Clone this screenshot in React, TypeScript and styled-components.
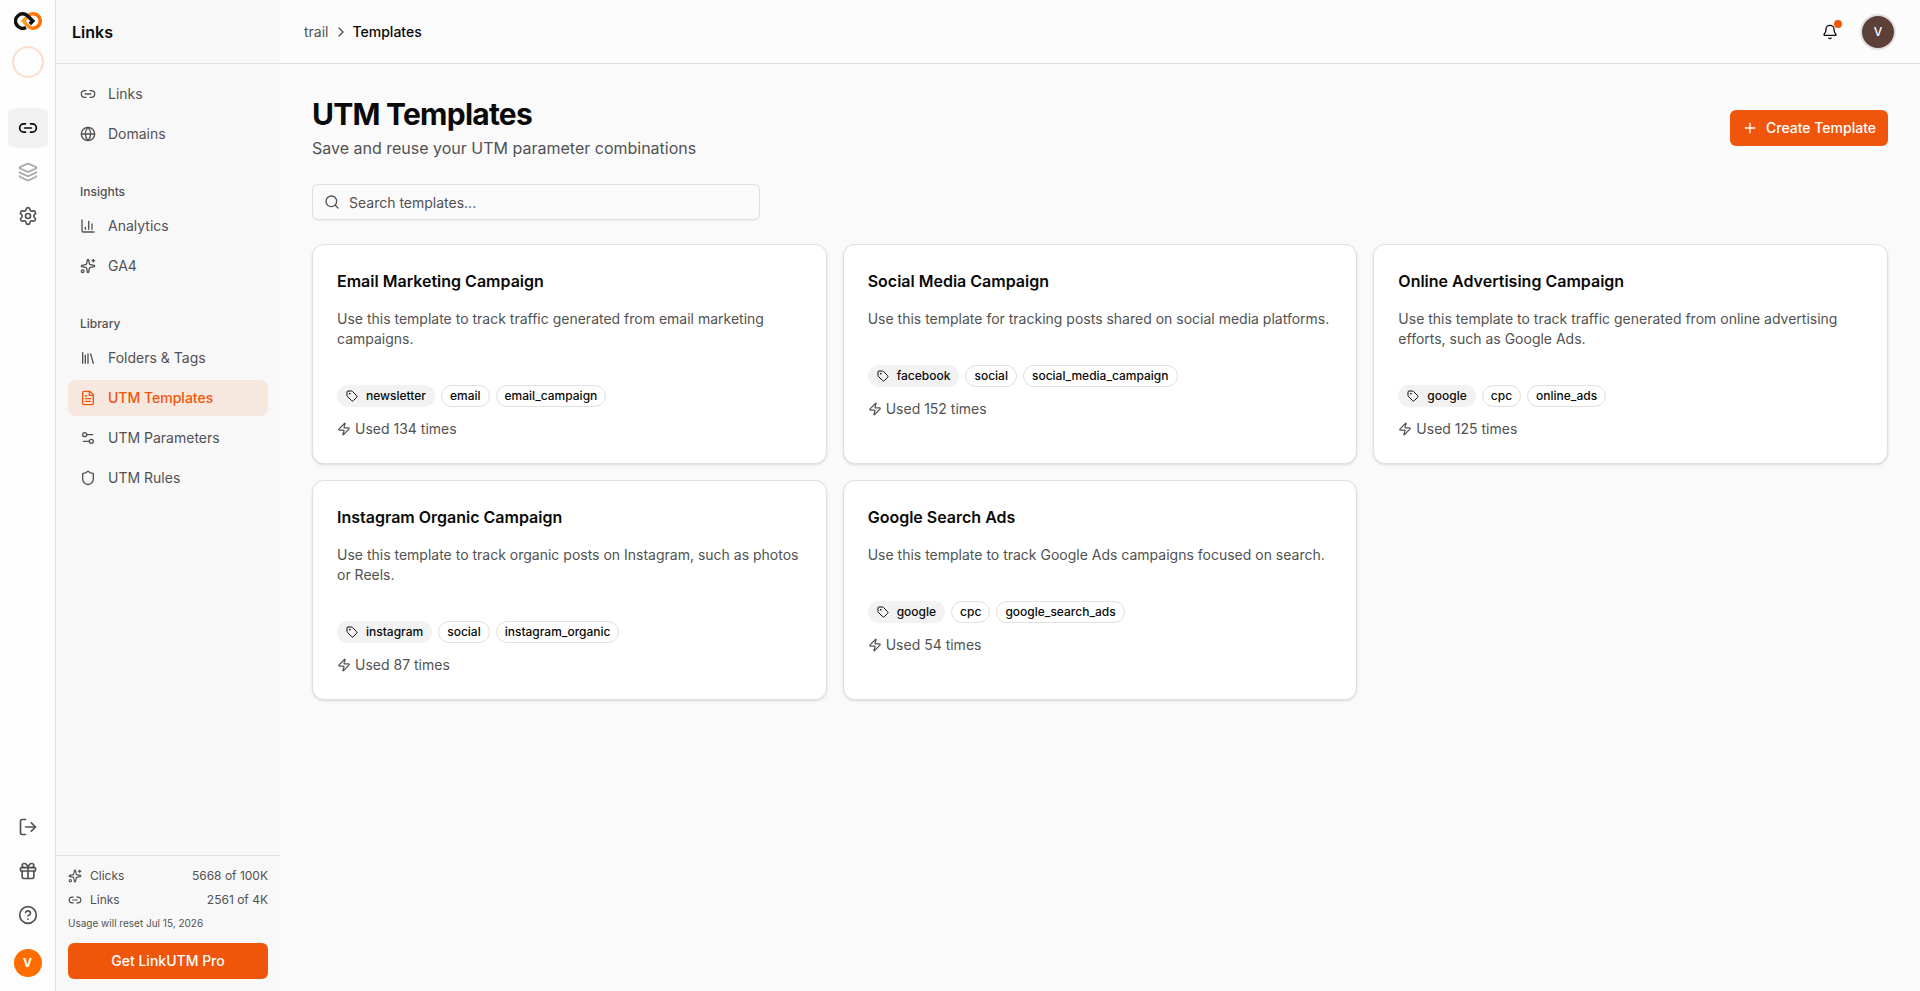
import React from 'react';
import styled, { createGlobalStyle, css } from 'styled-components';
import {
  Link2, Layers, Settings, LogOut, Gift, CircleHelp, Globe, ChartColumn, Sparkles, Library,
  FileText, Settings2, Shield, ChevronRight, Bell, Plus, Search, Tag, Zap,
} from 'lucide-react';

const GlobalStyle = createGlobalStyle`
  *, *::before, *::after { box-sizing: border-box; }
  body {
    margin: 0;
    font-family: Inter, "Liberation Sans", sans-serif;
    font-size: 14px;
    line-height: 20px;
    color: #0a0a0a;
    background: #fafafa;
  }
  h1, h2, p { margin: 0; }
  button, input { font: inherit; }
  svg { flex-shrink: 0; display: block; }
`;

const Shell = styled.div`
  display: flex;
  height: 100vh;
  overflow: hidden;
`;

const Rail = styled.nav`
  width: 56px;
  display: flex;
  flex-direction: column;
  align-items: center;
  padding: 12px 0 14px;
  background: #fdfdfd;
  border-right: 1px solid #e0e0e0;
`;

const Workspace = styled.div`
  width: 32px;
  height: 32px;
  margin: 16px 0 30px;
  border: 2px solid #fbdccd;
  border-radius: 50%;
`;

const RailGroup = styled.div<{ $bottom?: boolean }>`
  display: flex;
  flex-direction: column;
  gap: 4px;
  margin-top: ${(p) => (p.$bottom ? 'auto' : '0')};
`;

const RailButton = styled.button<{ $active?: boolean; $faded?: boolean }>`
  width: 40px;
  height: 40px;
  padding: 0;
  display: flex;
  align-items: center;
  justify-content: center;
  border: 0;
  border-radius: 8px;
  background: ${(p) => (p.$active ? '#f2f2f2' : 'transparent')};
  color: ${(p) => (p.$active ? '#0a0a0a' : '#525252')};
  svg { opacity: ${(p) => (p.$faded ? 0.5 : 1)}; }
`;

const RailAvatar = styled.div`
  width: 28px;
  height: 28px;
  margin-top: 14px;
  display: grid;
  place-items: center;
  border-radius: 50%;
  background: #ff6d00;
  color: #fff;
  font-size: 12px;
  font-weight: 700;
`;

const Sidebar = styled.aside`
  width: 224px;
  display: flex;
  flex-direction: column;
  background: #f8f8f8;
`;

const SidebarTitle = styled.h2`
  height: 64px;
  padding: 0 16px;
  display: flex;
  align-items: center;
  border-bottom: 1px solid #e0e0e0;
  font-size: 16px;
  font-weight: 600;
`;

const Nav = styled.div`
  flex: 1;
  padding: 12px;
  display: flex;
  flex-direction: column;
  gap: 24px;
`;

const NavGroup = styled.div`
  display: flex;
  flex-direction: column;
  gap: 4px;
`;

const NavLabel = styled.div`
  height: 28px;
  padding: 0 12px;
  font-size: 12px;
  line-height: 31px;
  font-weight: 500;
  color: #525252;
`;

const NavItem = styled.a<{ $active?: boolean }>`
  height: 36px;
  padding: 0 12px;
  display: flex;
  align-items: center;
  gap: 12px;
  border-radius: 8px;
  color: #525252;
  ${(p) => p.$active && css`
    background: #f7e8df;
    color: #f0560b;
    font-weight: 500;
  `}
`;

const Usage = styled.div`
  padding: 12px 12px 12px;
  border-top: 1px solid #e0e0e0;
  color: #525252;
`;

const UsageRow = styled.div`
  height: 16px;
  margin-bottom: 8px;
  display: flex;
  align-items: center;
  gap: 8px;
  font-size: 12px;
  span:last-child { margin-left: auto; }
`;

const ResetNote = styled.p`
  margin-bottom: 12px;
  font-size: 10px;
  line-height: 15px;
`;

const PrimaryButton = styled.button<{ $block?: boolean }>`
  width: ${(p) => (p.$block ? '100%' : 'auto')};
  height: 36px;
  padding: 0 12px;
  display: flex;
  align-items: center;
  justify-content: center;
  gap: 8px;
  border: 0;
  border-radius: 6px;
  background: #f0560b;
  color: #fff;
  font-weight: 500;
`;

const Main = styled.div`
  flex: 1;
  display: flex;
  flex-direction: column;
`;

const TopBar = styled.header`
  height: 64px;
  padding: 0 24px;
  display: flex;
  align-items: center;
  justify-content: space-between;
  background: #fcfcfc;
  border-bottom: 1px solid #e0e0e0;
`;

const Crumbs = styled.div`
  display: flex;
  align-items: center;
  gap: 4px;
  color: #525252;
  strong { color: #0a0a0a; font-weight: 500; }
`;

const Actions = styled.div`
  display: flex;
  align-items: center;
  gap: 20px;
`;

const BellButton = styled.div`
  position: relative;
  padding: 2px;
  color: #0a0a0a;
`;

const BellDot = styled.span`
  position: absolute;
  top: -2px;
  right: -2px;
  width: 8px;
  height: 8px;
  border-radius: 50%;
  background: #f0560b;
`;

const UserAvatar = styled.div`
  width: 36px;
  height: 36px;
  display: grid;
  place-items: center;
  border: 2px solid #e0e0e0;
  border-radius: 50%;
  background: #5d4037;
  color: #fff;
  font-size: 12px;
  font-weight: 500;
`;

const Content = styled.main`
  padding: 32px;
`;

const PageHead = styled.div`
  display: flex;
  align-items: center;
  justify-content: space-between;
  margin-bottom: 24px;
`;

const PageTitle = styled.h1`
  font-size: 30px;
  line-height: 36px;
  font-weight: 700;
  letter-spacing: -0.75px;
`;

const PageSubtitle = styled.p`
  font-size: 16px;
  line-height: 24px;
  margin-top: 4px;
  color: #525252;
`;

const SearchBox = styled.label`
  width: 448px;
  height: 36px;
  margin-bottom: 24px;
  padding: 0 11px;
  display: flex;
  align-items: center;
  gap: 9px;
  border: 1px solid #e0e0e0;
  border-radius: 6px;
  color: #525252;
  box-shadow: 0 1px 2px rgba(0, 0, 0, 0.05);
  input {
    flex: 1;
    padding: 2px 0 0;
    border: 0;
    outline: 0;
    background: transparent;
    &::placeholder { color: #525252; opacity: 1; }
  }
`;

const Grid = styled.div`
  display: grid;
  grid-template-columns: repeat(3, minmax(0, 1fr));
  gap: 16px;
`;

const Card = styled.article`
  min-height: 220px;
  padding: 24px;
  border: 1px solid #e0e0e0;
  border-radius: 12px;
  background: #fff;
  box-shadow: 0 1px 3px rgba(0, 0, 0, 0.1), 0 1px 2px -1px rgba(0, 0, 0, 0.1);
`;

const CardTitle = styled.h2`
  font-size: 16px;
  line-height: 24px;
  font-weight: 600;
`;

const CardText = styled.p`
  margin: 16px 0 36px;
  color: #525252;
`;

const Badges = styled.div`
  display: flex;
  gap: 6px;
  margin-bottom: 12px;
`;

const Badge = styled.span<{ $filled?: boolean }>`
  height: 22px;
  padding: 0 8px;
  display: inline-flex;
  align-items: center;
  gap: 8px;
  border: 1px solid ${(p) => (p.$filled ? 'transparent' : '#e0e0e0')};
  border-radius: 11px;
  background: ${(p) => (p.$filled ? '#f2f2f2' : 'transparent')};
  font-size: 12px;
  line-height: 16px;
  font-weight: 500;
`;

const Used = styled.div`
  display: flex;
  align-items: center;
  gap: 4px;
  color: #525252;
`;

const Logo = () => (
  <svg width="28" height="18" viewBox="0 0 28 18" fill="none">
    <defs>
      <linearGradient id="ring" x1="8" y1="0" x2="22" y2="0" gradientUnits="userSpaceOnUse">
        <stop stopColor="#ffa726" />
        <stop offset="1" stopColor="#ff6d00" />
      </linearGradient>
    </defs>
    <path d="M9.2 9L14.2 14.3A7.2 7.2 0 1 0 14.2 3.7Z" stroke="url(#ring)" strokeWidth="3.5" />
    <path d="M12 15.5A7.2 7.2 0 1 1 13.8 3.9L18.8 9L15.8 12" stroke="#111" strokeWidth="3.5" />
  </svg>
);

const navGroups = [
  { label: '', items: [['Links', Link2], ['Domains', Globe]] },
  { label: 'Insights', items: [['Analytics', ChartColumn], ['GA4', Sparkles]] },
  {
    label: 'Library',
    items: [
      ['Folders & Tags', Library], ['UTM Templates', FileText],
      ['UTM Parameters', Settings2], ['UTM Rules', Shield],
    ],
  },
] as { label: string; items: [string, React.ElementType][] }[];

const templates = [
  { title: 'Email Marketing Campaign', text: 'Use this template to track traffic generated from email marketing campaigns.', tags: ['newsletter', 'email', 'email_campaign'], used: 134 },
  { title: 'Social Media Campaign', text: 'Use this template for tracking posts shared on social media platforms.', tags: ['facebook', 'social', 'social_media_campaign'], used: 152 },
  { title: 'Online Advertising Campaign', text: 'Use this template to track traffic generated from online advertising efforts, such as Google Ads.', tags: ['google', 'cpc', 'online_ads'], used: 125 },
  { title: 'Instagram Organic Campaign', text: 'Use this template to track organic posts on Instagram, such as photos or Reels.', tags: ['instagram', 'social', 'instagram_organic'], used: 87 },
  { title: 'Google Search Ads', text: 'Use this template to track Google Ads campaigns focused on search.', tags: ['google', 'cpc', 'google_search_ads'], used: 54 },
];

export default function App() {
  return (
    <Shell>
      <GlobalStyle />
      <Rail>
        <Logo />
        <Workspace />
        <RailGroup>
          <RailButton $active><Link2 size={20} /></RailButton>
          <RailButton $faded><Layers size={20} /></RailButton>
          <RailButton><Settings size={20} /></RailButton>
        </RailGroup>
        <RailGroup $bottom>
          <RailButton><LogOut size={20} /></RailButton>
          <RailButton><Gift size={20} /></RailButton>
          <RailButton><CircleHelp size={20} /></RailButton>
        </RailGroup>
        <RailAvatar>V</RailAvatar>
      </Rail>
      <Sidebar>
        <SidebarTitle>Links</SidebarTitle>
        <Nav>
          {navGroups.map((group) => (
            <NavGroup key={group.label}>
              {group.label && <NavLabel>{group.label}</NavLabel>}
              {group.items.map(([name, Icon]) => (
                <NavItem key={name} $active={name === 'UTM Templates'}>
                  <Icon size={16} />
                  {name}
                </NavItem>
              ))}
            </NavGroup>
          ))}
        </Nav>
        <Usage>
          <UsageRow><Sparkles size={14} /><span>Clicks</span><span>5668 of 100K</span></UsageRow>
          <UsageRow><Link2 size={14} /><span>Links</span><span>2561 of 4K</span></UsageRow>
          <ResetNote>Usage will reset Jul 15, 2026</ResetNote>
          <PrimaryButton $block>Get LinkUTM Pro</PrimaryButton>
        </Usage>
      </Sidebar>
      <Main>
        <TopBar>
          <Crumbs><span>trail</span><ChevronRight size={16} /><strong>Templates</strong></Crumbs>
          <Actions>
            <BellButton><Bell size={16} /><BellDot /></BellButton>
            <UserAvatar>V</UserAvatar>
          </Actions>
        </TopBar>
        <Content>
          <PageHead>
            <div>
              <PageTitle>UTM Templates</PageTitle>
              <PageSubtitle>Save and reuse your UTM parameter combinations</PageSubtitle>
            </div>
            <PrimaryButton><Plus size={16} />Create Template</PrimaryButton>
          </PageHead>
          <SearchBox>
            <Search size={16} />
            <input placeholder="Search templates..." />
          </SearchBox>
          <Grid>
            {templates.map((t) => (
              <Card key={t.title}>
                <CardTitle>{t.title}</CardTitle>
                <CardText>{t.text}</CardText>
                <Badges>
                  {t.tags.map((tag, i) => (
                    <Badge key={tag} $filled={i === 0}>
                      {i === 0 && <Tag size={12} />}
                      {tag}
                    </Badge>
                  ))}
                </Badges>
                <Used><Zap size={14} />Used {t.used} times</Used>
              </Card>
            ))}
          </Grid>
        </Content>
      </Main>
    </Shell>
  );
}
